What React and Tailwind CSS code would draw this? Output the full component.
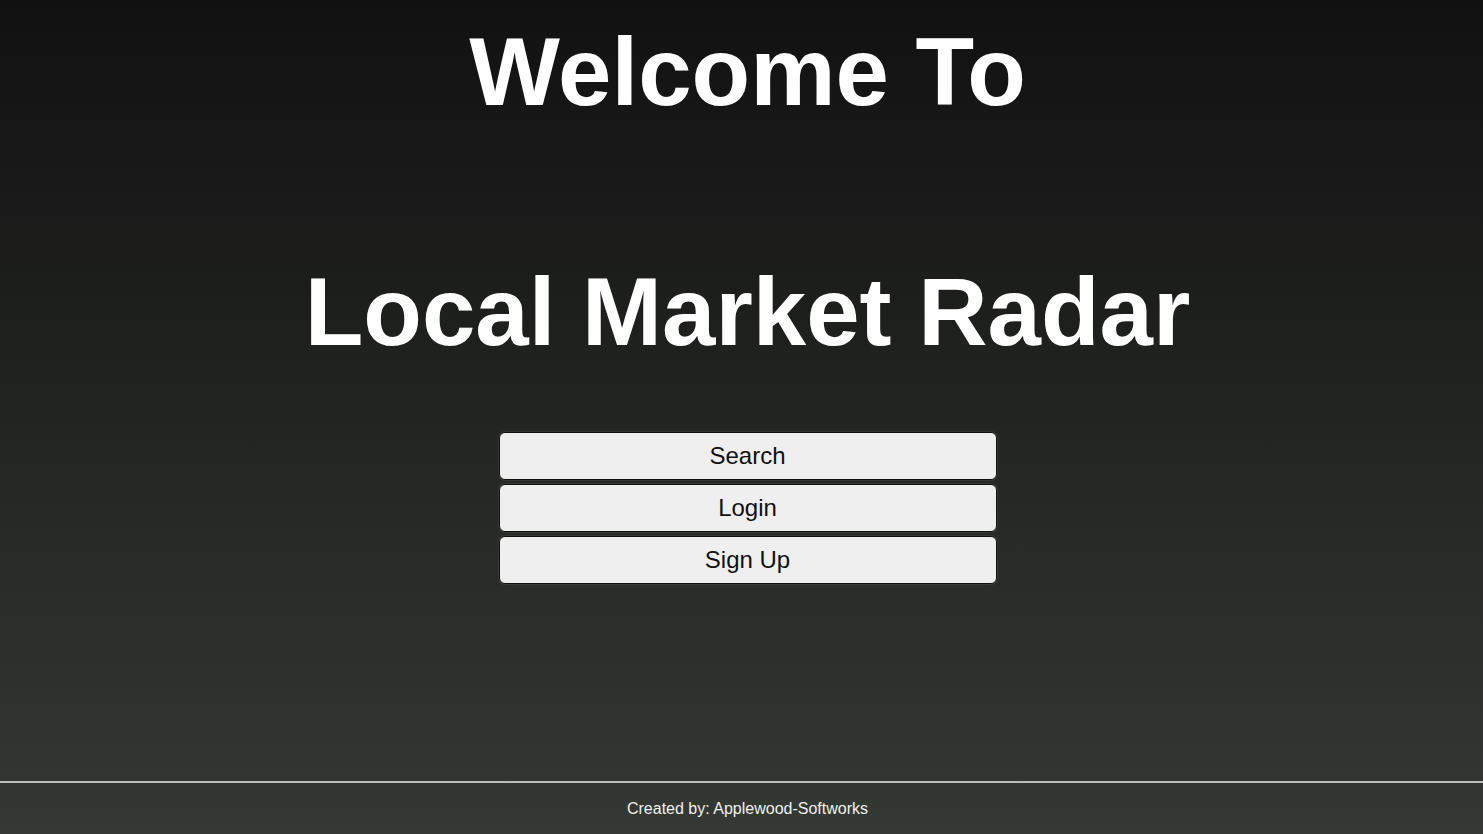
const App = () => {
  const buttons = ['Search', 'Login', 'Sign Up'];

  return (
    <div
      className="h-[834px] flex flex-col bg-gradient-to-b from-[#111111] to-[#343933] text-white pl-3"
      style={{ fontFamily: '"Liberation Sans", Arial, sans-serif' }}
    >
      {/* Hero */}
      <main className="flex-1 flex flex-col items-center">
        <h1 className="mt-[17px] text-[96px] leading-[110px] font-bold">Welcome To</h1>
        <h1 className="mt-[130px] text-[96px] leading-[110px] font-bold">Local Market Radar</h1>

        <div className="mt-[65px] flex flex-col gap-1 w-[498px]">
          {buttons.map(label => (
            <button
              key={label}
              className="h-[48px] rounded-[6px] bg-[#efefef] text-[#111111] text-[24px] border border-[#101010] shadow-[0_0_2px_rgba(255,255,255,0.25)]"
            >
              {label}
            </button>
          ))}
        </div>
      </main>

      {/* Footer */}
      <footer className="h-[53px] -ml-3 pl-3 border-t-2 border-[#bdbdbd] flex items-center justify-center">
        <span className="text-[16px] text-[#f0f0f0]">Created by: Applewood-Softworks</span>
      </footer>
    </div>
  );
};

export default App;
